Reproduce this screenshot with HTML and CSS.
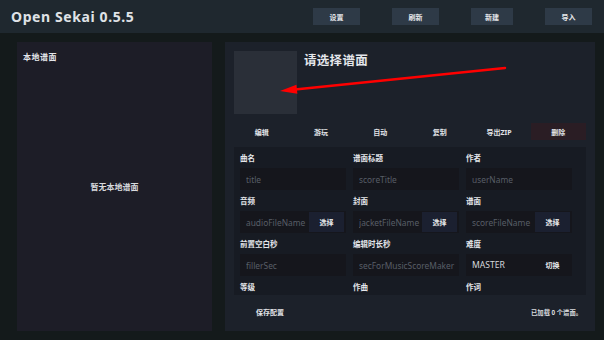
FILE: index.html
```html
<!DOCTYPE html>
<html lang="zh-CN">
<head>
  <meta charset="UTF-8">
  <meta name="viewport" content="width=device-width, initial-scale=1.0">
  <title>Open Sekai 0.5.5</title>
  <link rel="stylesheet" href="styles.css">
</head>
<body>
  <header class="topbar">
    <div class="brand">Open Sekai 0.5.5</div>
    <nav class="top-actions">
      <button class="top-btn">设置</button>
      <button class="top-btn">刷新</button>
      <button class="top-btn narrow">新建</button>
      <button class="top-btn">导入</button>
    </nav>
  </header>

  <main class="workspace">
    <aside class="local-panel">
      <div class="panel-title">本地谱面</div>
      <div class="empty">暂无本地谱面</div>
    </aside>

    <section class="detail-panel">
      <div class="detail-head">
        <div class="cover"></div>
        <h2 class="detail-title">请选择谱面</h2>
      </div>

      <div class="actions">
        <button class="act">编辑</button>
        <button class="act">游玩</button>
        <button class="act">自动</button>
        <button class="act">复制</button>
        <button class="act">导出ZIP</button>
        <button class="act danger">删除</button>
      </div>

      <div class="form">
        <div class="field">
          <label>曲名</label>
          <div class="box"><input placeholder="title"></div>
        </div>
        <div class="field">
          <label>谱面标题</label>
          <div class="box"><input placeholder="scoreTitle"></div>
        </div>
        <div class="field">
          <label>作者</label>
          <div class="box"><input placeholder="userName"></div>
        </div>

        <div class="field">
          <label>音频</label>
          <div class="box"><input placeholder="audioFileName"><button class="pick">选择</button></div>
        </div>
        <div class="field">
          <label>封面</label>
          <div class="box"><input placeholder="jacketFileName"><button class="pick">选择</button></div>
        </div>
        <div class="field">
          <label>谱面</label>
          <div class="box"><input placeholder="scoreFileName"><button class="pick">选择</button></div>
        </div>

        <div class="field">
          <label>前置空白秒</label>
          <div class="box"><input placeholder="fillerSec"></div>
        </div>
        <div class="field">
          <label>编辑时长秒</label>
          <div class="box"><input placeholder="secForMusicScoreMaker"></div>
        </div>
        <div class="field">
          <label>难度</label>
          <div class="box"><span class="value">MASTER</span><button class="pick plain">切换</button></div>
        </div>

        <div class="field">
          <label>等级</label>
          <div class="box"><input placeholder="level"></div>
        </div>
        <div class="field">
          <label>作曲</label>
          <div class="box"><input placeholder="composer"></div>
        </div>
        <div class="field">
          <label>作词</label>
          <div class="box"><input placeholder="lyricist"></div>
        </div>
      </div>

      <div class="footer">
        <button class="save">保存配置</button>
        <span class="status">已加载 0 个谱面。</span>
      </div>

      <!-- hint arrow pointing at the cover -->
      <svg class="hint-arrow" width="370" height="289" viewBox="0 0 370 289">
        <line x1="280" y1="26" x2="70" y2="47.5" stroke="#ff0000" stroke-width="2.5" stroke-linecap="round"/>
        <polygon points="55,49 72.4,51.8 71.4,42.8" fill="#ff0000"/>
      </svg>
    </section>
  </main>
</body>
</html>
```

FILE: styles.css
```css
* {
  box-sizing: border-box;
}
body {
  margin: 0;
  width: 604px;
  height: 340px;
  overflow: hidden;
  background: #141a1b;
  color: #e4e6ea;
  font-family: 'Noto Sans', 'Noto Sans CJK SC', sans-serif;
}
button {
  font-family: 'Noto Sans', 'Noto Sans CJK SC', sans-serif;
  border: none;
  cursor: pointer;
  padding: 0;
}

.topbar {
  height: 33px;
  background: #1f282f;
  display: flex;
  align-items: center;
  justify-content: space-between;
  padding: 0 12px 0 11px;
}
.brand {
  font-size: 14px;
  font-weight: bold;
  letter-spacing: 0.6px;
  color: #dfe2e6;
}
.top-actions {
  display: flex;
  gap: 32px;
}
.top-btn {
  width: 47px;
  height: 17px;
  background: #2e3a47;
  color: #e6e8eb;
  font-size: 7px;
  font-weight: bold;
}
.top-btn.narrow {
  width: 42px;
}

.workspace {
  height: 307px;
  display: flex;
  gap: 13px;
  padding: 9px 9px 9px 17px;
}

.local-panel {
  width: 195px;
  background: #1d1d27;
  display: flex;
  flex-direction: column;
  padding-bottom: 30px;
}
.panel-title {
  height: 30px;
  padding: 10px 6px;
  font-size: 8px;
  line-height: 10px;
  font-weight: bold;
  letter-spacing: 0.5px;
}
.empty {
  flex: 1;
  display: flex;
  align-items: center;
  justify-content: center;
  font-size: 8px;
  font-weight: bold;
  color: #d8dade;
}

.detail-panel {
  flex: 1;
  position: relative;
  background: #1c212a;
  padding: 9px;
  display: flex;
  flex-direction: column;
}
.detail-head {
  display: flex;
  gap: 7px;
}
.cover {
  width: 63px;
  height: 63px;
  background: #2a2f38;
}
.detail-title {
  margin: 2px 0 0;
  font-size: 12.5px;
  line-height: 16px;
  font-weight: bold;
  letter-spacing: 0.3px;
}

.actions {
  margin-top: 9px;
  display: grid;
  grid-template-columns: repeat(6, 1fr);
  gap: 4px;
}
.act {
  height: 17px;
  background: transparent;
  color: #e2e4e8;
  font-size: 7px;
  font-weight: bold;
}
.act.danger {
  background: #2a1d24;
}

.form {
  margin-top: 7px;
  height: 148px;
  overflow: hidden;
  background: #171b23;
  padding: 0 14px 0 6px;
  display: grid;
  grid-template-columns: repeat(3, 106px);
  column-gap: 7px;
  align-content: start;
}
.field label {
  display: block;
  padding: 6px 0 5px;
  font-size: 7.5px;
  line-height: 10px;
  font-weight: bold;
  color: #e4e6ea;
}
.box {
  height: 22px;
  background: #15161c;
  display: flex;
  align-items: center;
  padding: 1px 2px 1px 6px;
}
.box input {
  flex: 1;
  min-width: 0;
  height: 100%;
  border: none;
  outline: none;
  background: transparent;
  padding: 0;
  font-family: 'Noto Sans', sans-serif;
  font-size: 8.4px;
  color: #d5d8dd;
  text-overflow: ellipsis;
}
.box input::placeholder {
  color: #585e67;
}
.value {
  flex: 1;
  font-size: 8.6px;
  color: #d5d8dd;
}
.pick {
  width: 35px;
  height: 100%;
  margin-left: 2px;
  background: #1b2030;
  color: #e6e8eb;
  font-size: 7px;
  font-weight: bold;
}
.pick.plain {
  background: transparent;
}

.footer {
  margin-top: 7px;
  height: 20px;
  display: flex;
  align-items: center;
  justify-content: space-between;
  padding-right: 4px;
}
.save {
  width: 72px;
  height: 20px;
  background: transparent;
  color: #e2e4e8;
  font-size: 7px;
  font-weight: bold;
}
.status {
  font-size: 6.3px;
  font-weight: bold;
  color: #d8dade;
}

.hint-arrow {
  position: absolute;
  left: 0;
  top: 0;
  pointer-events: none;
}
```
